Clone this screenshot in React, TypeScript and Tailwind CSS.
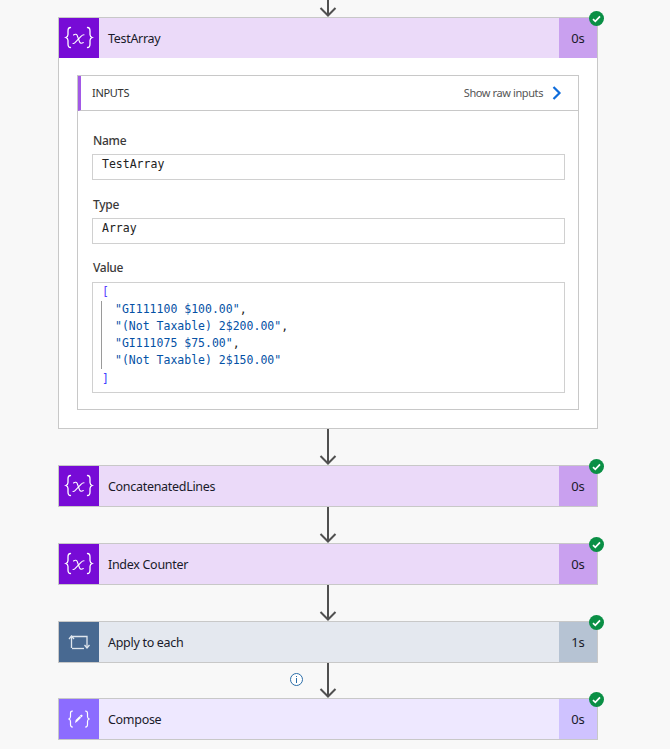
import React from "react";

const sans = "font-['Noto_Sans','Open_Sans',sans-serif]";

function VarIcon() {
  return (
    <div className="flex h-10 w-10 shrink-0 items-center justify-center bg-[#770bd6] text-white">
      <svg width="30" height="24" viewBox="0 0 30 24" fill="none" stroke="#fff" strokeWidth="1.300" strokeLinecap="round">
        <path d="M6.500 1.500c-2.500 0-2.500 1.500-2.500 3.500v3.500c0 1.500-.7 2.500-2.200 3 1.500.5 2.200 1.500 2.200 3V18c0 2 0 3.500 2.500 3.500" />
        <path d="M23.500 1.500c2.500 0 2.500 1.500 2.500 3.500v3.500c0 1.500.7 2.500 2.200 3-1.500.5-2.200 1.500-2.200 3V18c0 2 0 3.500-2.500 3.500" />
        <path d="M9.500 9c1.800-1.200 3.200-.9 3.800.7l2.200 6.100c.6 1.500 2 1.900 3.800.7" strokeWidth="1.100" />
        <path d="M20 8.800c-1 0-1.900.4-3 1.600l-6 6.300c-.6.600-1.300.9-2 .8" strokeWidth="1.100" />
      </svg>
    </div>
  );
}

function LoopIcon() {
  return (
    <div className="flex h-10 w-10 shrink-0 items-center justify-center bg-[#486991]">
      <svg width="22" height="18" viewBox="0 0 22 18" fill="none" stroke="#dfe6ee" strokeWidth="1.300">
        <path d="M3.500 15V3.500H19V14" />
        <path d="M1 6l2.500-3 2.500 3" />
        <path d="M16 15.500H4" />
        <path d="M16.500 12l2.500 3 2.500-3" />
      </svg>
    </div>
  );
}

function ComposeIcon() {
  return (
    <div className="flex h-10 w-10 shrink-0 items-center justify-center bg-[#8c6cff]">
      <svg width="22" height="22" viewBox="0 0 22 22" fill="none" stroke="#fff" strokeWidth="1.200" strokeLinecap="round">
        <path d="M4.500 3c-2 0-2 1-2 2.500v3c0 1.200-.5 2-1.500 2.500 1 .5 1.500 1.300 1.500 2.500v3c0 1.500 0 2.500 2 2.500" />
        <path d="M17.500 3c2 0 2 1 2 2.500v3c0 1.200.5 2 1.500 2.500-1 .5-1.500 1.300-1.500 2.500v3c0 1.500 0 2.500-2 2.500" />
        <path d="M7 15l.7-3 5-5c.5-.5 1.200-.5 1.600 0 .4.400.4 1 0 1.500l-5 5z" fill="#fff" stroke="none" />
        <path d="M11.700 8l2 2" stroke="#8c6cff" strokeWidth="0.700" />
      </svg>
    </div>
  );
}

function Check() {
  return (
    <div className="absolute right-[-7px] top-[-7px] flex h-[15px] w-[15px] items-center justify-center rounded-full bg-[#0a8f45]">
      <svg width="9" height="8" viewBox="0 0 9 8" fill="none" stroke="#fff" strokeWidth="1.700">
        <path d="M1 4.200l2.300 2.200L8 1.300" />
      </svg>
    </div>
  );
}

function Header({ icon, title, time, bg, timeBg }: { icon: React.ReactNode; title: string; time: string; bg: string; timeBg: string }) {
  return (
    <div className={`flex h-10 items-center ${bg}`}>
      {icon}
      <div className="flex-1 pl-[9px] pt-[2px] text-[12.500px] tracking-[-0.3px] text-[#1a1a2a]">{title}</div>
      <div className={`flex h-10 w-[38px] items-center justify-center pt-[2px] text-[13px] text-[#1a1a2a] ${timeBg}`}>{time}</div>
    </div>
  );
}

function Card({ children }: { children: React.ReactNode }) {
  return <div className="relative border border-[#c8c8c8] bg-white">{children}</div>;
}

function Arrow({ h, info }: { h: number; info?: boolean }) {
  return (
    <div className="relative flex justify-center" style={{ height: h }}>
      <svg width="20" height={h} viewBox={`0 0 20 ${h}`} fill="none" stroke="#505050" strokeWidth="2">
        <path d={`M10 0V${h - 1}`} />
        <path d={`M2.500 ${h - 9}L10 ${h - 1.500}L17.500 ${h - 9}`} />
      </svg>
      {info && (
        <div className="absolute left-[232px] top-[10px] flex h-[13px] w-[13px] items-center justify-center rounded-full border border-[#2b6da8] bg-white">
          <svg width="3" height="7" viewBox="0 0 3 7" fill="#2b6da8"><rect x="1" y="0" width="1" height="1" /><rect x="1" y="2" width="1" height="5" /></svg>
        </div>
      )}
    </div>
  );
}

function Label({ text, mb }: { text: string; mb: string }) {
  return <div className={`h-[19px] pl-[1px] text-[12px] font-medium leading-[19px] tracking-[-0.3px] text-[#3b3a39] ${mb}`}>{text}</div>;
}

function Field({ label, value }: { label: string; value: string }) {
  return (
    <div className="flex flex-col">
      <Label text={label} mb="mb-[4px]" />
      <div className="h-[26px] border border-[#d0d0d0] bg-white pl-[9px] font-['DejaVu_Sans_Mono',monospace] text-[11.500px] leading-[18px] text-[#222]">{value}</div>
    </div>
  );
}

const lines = ['"GI111100 $100.00"', '"(Not Taxable) 2$200.00"', '"GI111075 $75.00"', '"(Not Taxable) 2$150.00"'];

export default function App() {
  return (
    <div className={`h-[749px] w-[670px] overflow-hidden bg-[#f8f8f8] ${sans}`}>
      <div className="ml-[58px] w-[540px]">
        <Arrow h={17} />
        <Card>
          <Check />
          <Header icon={<VarIcon />} title="TestArray" time="0s" bg="bg-[#ebdaf9]" timeBg="bg-[#c9a0ef]" />
          <div className="px-[18px] pb-[18px] pt-[17px]">
            <div className="border border-[#c8c8c8]">
              <div className="flex h-[35px] items-center justify-between border-b border-[#c8c8c8] border-l-[3px] border-l-[#a259e6] pl-[11px] pr-[16px]">
                <span className="text-[11px] tracking-[-0.3px] text-[#333]">INPUTS</span>
                <span className="flex items-center gap-[8px] text-[11px] tracking-[-0.4px] text-[#555]">
                  Show raw inputs
                  <svg width="11" height="14" viewBox="0 0 11 14" fill="none" stroke="#0f6cdb" strokeWidth="2.200"><path d="M2.500 1l6 6-6 6" /></svg>
                </span>
              </div>
              <div className="flex flex-col pb-4 pl-[14px] pr-[13px] pt-[20px]">
                <Field label="Name" value="TestArray" />
                <div className="h-[15px]" />
                <Field label="Type" value="Array" />
                <div className="h-[14px]" />
                <div>
                  <Label text="Value" mb="mb-[5px]" />
                  <div className="h-[111px] border border-[#d0d0d0] bg-white pl-[9px] pt-[1px] font-['DejaVu_Sans_Mono',monospace] text-[11.500px] leading-[17px] text-[#0451a5]">
                    <div className="text-[#5a3fff]">[</div>
                    <div className="ml-[-1px] border-l border-[#9a9a9a] pl-[13px]">
                      {lines.map((l, i) => (
                        <div key={l}>
                          {l}
                          {i < 3 && <span className="text-[#222]">,</span>}
                        </div>
                      ))}
                    </div>
                    <div className="mt-[2px] text-[#3b3fff]">]</div>
                  </div>
                </div>
              </div>
            </div>
          </div>
        </Card>
        <Arrow h={36} />
        <Card>
          <Check />
          <Header icon={<VarIcon />} title="ConcatenatedLines" time="0s" bg="bg-[#ebdaf9]" timeBg="bg-[#c9a0ef]" />
        </Card>
        <Arrow h={36} />
        <Card>
          <Check />
          <Header icon={<VarIcon />} title="Index Counter" time="0s" bg="bg-[#ebdaf9]" timeBg="bg-[#c9a0ef]" />
        </Card>
        <Arrow h={36} />
        <Card>
          <Check />
          <Header icon={<LoopIcon />} title="Apply to each" time="1s" bg="bg-[#e4e8ef]" timeBg="bg-[#b6c3d3]" />
        </Card>
        <Arrow h={35} info />
        <Card>
          <Check />
          <Header icon={<ComposeIcon />} title="Compose" time="0s" bg="bg-[#eee8ff]" timeBg="bg-[#cfc2ff]" />
        </Card>
      </div>
    </div>
  );
}
